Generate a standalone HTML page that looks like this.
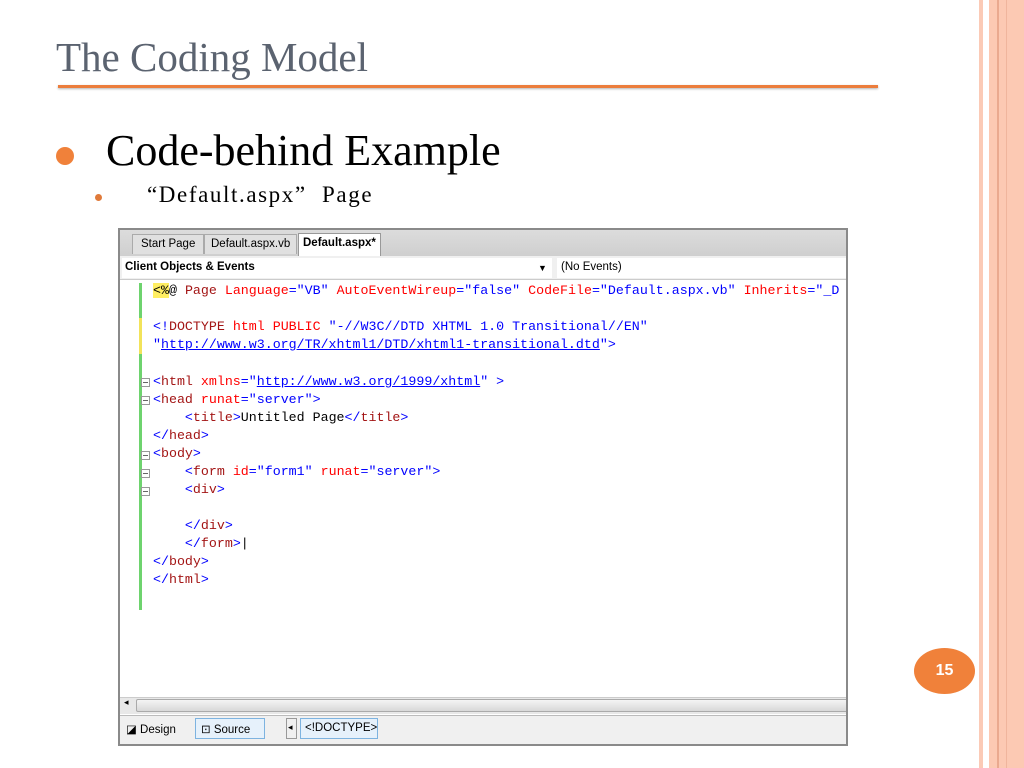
<!DOCTYPE html>
<html><head><meta charset="utf-8"><style>
*{margin:0;padding:0;box-sizing:border-box}
body{width:1024px;height:768px;background:#fff;position:relative;overflow:hidden;font-family:"Liberation Serif",serif}
.a{position:absolute}
.code{font-family:"Liberation Mono",monospace;font-size:13.3px;white-space:pre;line-height:18px;color:#000}
.t{color:#a31515}.b{color:#0000ff}.at{color:#ff0000}.s{color:#0000ff}.u{color:#0000ff;text-decoration:underline}
.ui{font-family:"Liberation Sans",sans-serif;font-size:11.5px;color:#000}
.box{width:9px;height:9px;border:1px solid #999;background:#fff}
.box:after{content:"";position:absolute;left:1px;top:3px;width:5px;height:1px;background:#666}
</style></head><body>
<div class="a" style="left:979px;top:0;width:4px;height:768px;background:#fbcab6"></div>
<div class="a" style="left:989px;top:0;width:35px;height:768px;background:#fcc9b3"></div>
<div class="a" style="left:997px;top:0;width:2px;height:768px;background:#eaa98f"></div>
<div class="a" style="left:1006px;top:0;width:1px;height:768px;background:#f0b59d"></div>
<div class="a" style="left:914px;top:648px;width:61px;height:46px;border-radius:50%;background:#f0813a;color:#fff;font:bold 16px 'Liberation Sans',sans-serif;text-align:center;line-height:46px">15</div>
<div class="a" style="left:56px;top:32px;font-size:41px;color:#5b6370;line-height:50px">The Coding Model</div>
<div class="a" style="left:58px;top:85px;width:820px;height:3px;background:#ec7d3c;box-shadow:0 1px 2px rgba(0,0,0,.3)"></div>
<div class="a" style="left:56px;top:147px;width:18px;height:18px;border-radius:50%;background:#f0813a"></div>
<div class="a" style="left:106px;top:124px;font-size:44px;line-height:54px;color:#000">Code-behind Example</div>
<div class="a" style="left:95px;top:194px;width:7px;height:7px;border-radius:50%;background:#e07a3a"></div>
<div class="a" style="left:147px;top:180px;font-size:23px;line-height:30px;color:#000;letter-spacing:1.6px;word-spacing:8px">“Default.aspx”  Page</div>
<div class="a" style="left:118px;top:228px;width:730px;height:518px;border:2px solid #8a8a8a;background:#fff;overflow:hidden">
  <div class="a" style="left:0;top:0;width:728px;height:26px;background:linear-gradient(#dcdcdc,#cfcfcf)"></div>
  <div class="a ui" style="left:12px;top:4px;height:20px;padding:3px 8px;background:#e0e0e0;border:1px solid #aaa;border-bottom:none">Start Page</div>
  <div class="a ui" style="left:84px;top:4px;height:20px;padding:3px 6px;background:#e0e0e0;border:1px solid #aaa;border-bottom:none">Default.aspx.vb</div>
  <div class="a ui" style="left:178px;top:3px;height:23px;padding:3px 4px;background:#fff;border:1px solid #999;border-bottom:none;font-weight:bold">Default.aspx*</div>
  <div class="a" style="left:0;top:26px;width:728px;height:24px;background:#f0f0f0;border-bottom:1px solid #ccc"></div>
  <div class="a ui" style="left:2px;top:28px;width:430px;height:20px;background:#fff;padding:3px 3px;font-weight:bold">Client Objects &amp; Events<span style="position:absolute;left:416px;font-size:9px;top:5px">▼</span></div>
  <div class="a ui" style="left:437px;top:28px;width:291px;height:20px;background:#fff;padding:3px 4px">(No Events)</div>
  <div class="a" style="left:19px;top:53px;width:3px;height:327px;background:#6ed36e"></div>
  <div class="a" style="left:19px;top:88px;width:3px;height:36px;background:#f2e35a"></div>
  <div class="a box" style="left:21px;top:148px"></div>
  <div class="a box" style="left:21px;top:166px"></div>
  <div class="a box" style="left:21px;top:221px"></div>
  <div class="a box" style="left:21px;top:239px"></div>
  <div class="a box" style="left:21px;top:257px"></div>
  <div class="a code" style="left:33px;top:52px"><span style="background:#ffee62">&lt;%</span>@ <span class="t">Page</span> <span class="at">Language</span><span class="b">="VB"</span> <span class="at">AutoEventWireup</span><span class="b">="false"</span> <span class="at">CodeFile</span><span class="b">="Default.aspx.vb"</span> <span class="at">Inherits</span><span class="b">="_D</span>

<span class="b">&lt;!</span><span class="t">DOCTYPE</span> <span class="at">html</span> <span class="at">PUBLIC</span> <span class="b">"-//W3C//DTD XHTML 1.0 Transitional//EN"</span>
<span class="b">"<span class="u">http://www.w3.org/TR/xhtml1/DTD/xhtml1-transitional.dtd</span>"&gt;</span></div>
  <div class="a code" style="left:33px;top:143px"><span class="b">&lt;</span><span class="t">html</span> <span class="at">xmlns</span><span class="b">="<span class="u">http://www.w3.org/1999/xhtml</span>"</span> <span class="b">&gt;</span>
<span class="b">&lt;</span><span class="t">head</span> <span class="at">runat</span><span class="b">="server"&gt;</span>
    <span class="b">&lt;</span><span class="t">title</span><span class="b">&gt;</span>Untitled Page<span class="b">&lt;/</span><span class="t">title</span><span class="b">&gt;</span>
<span class="b">&lt;/</span><span class="t">head</span><span class="b">&gt;</span>
<span class="b">&lt;</span><span class="t">body</span><span class="b">&gt;</span>
    <span class="b">&lt;</span><span class="t">form</span> <span class="at">id</span><span class="b">="form1"</span> <span class="at">runat</span><span class="b">="server"&gt;</span>
    <span class="b">&lt;</span><span class="t">div</span><span class="b">&gt;</span>

    <span class="b">&lt;/</span><span class="t">div</span><span class="b">&gt;</span>
    <span class="b">&lt;/</span><span class="t">form</span><span class="b">&gt;</span>|
<span class="b">&lt;/</span><span class="t">body</span><span class="b">&gt;</span>
<span class="b">&lt;/</span><span class="t">html</span><span class="b">&gt;</span></div>
  <div class="a" style="left:0;top:467px;width:728px;height:17px;background:#e8e8e8;border-top:1px solid #ccc"></div>
  <div class="a" style="left:16px;top:469px;width:712px;height:13px;background:linear-gradient(#f4f4f4,#d8d8d8);border:1px solid #aaa;border-radius:2px"></div>
  <div class="a ui" style="left:4px;top:467px;font-size:9px">◂</div>
  <div class="a" style="left:0;top:485px;width:728px;height:29px;background:#f0f0f0;border-top:1px solid #bbb"></div>
  <div class="a ui" style="left:6px;top:492px">◪ Design</div>
  <div class="a ui" style="left:75px;top:488px;width:70px;height:21px;border:1px solid #7db3e0;background:#e6f1fb;padding:3px 5px">⊡ Source</div>
  <div class="a ui" style="left:166px;top:488px;width:11px;height:21px;border:1px solid #999;padding:3px 1px;font-size:9px">◂</div>
  <div class="a ui" style="left:180px;top:488px;width:78px;height:21px;border:1px solid #7db3e0;background:#e6f1fb;padding:3px 4px">&lt;!DOCTYPE&gt;</div>
</div>
</body></html>
